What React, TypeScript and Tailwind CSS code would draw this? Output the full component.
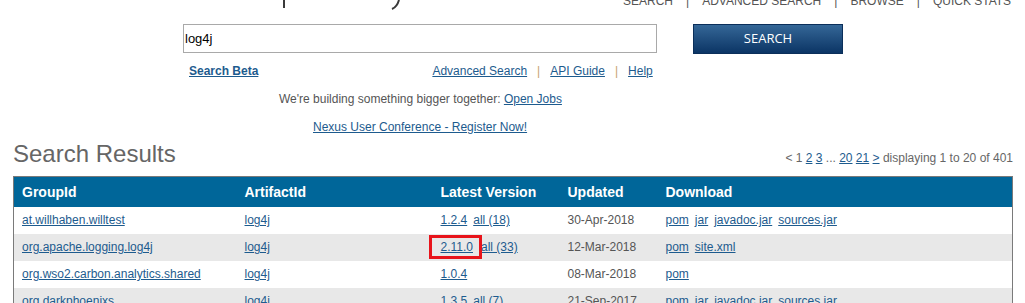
import React from 'react';

const rows = [
  { g: 'at.willhaben.willtest', a: 'log4j', v: '1.2.4', all: 'all (18)', d: '30-Apr-2018', dl: ['pom', 'jar', 'javadoc.jar', 'sources.jar'] },
  { g: 'org.apache.logging.log4j', a: 'log4j', v: '2.11.0', all: 'all (33)', d: '12-Mar-2018', dl: ['pom', 'site.xml'], mark: true },
  { g: 'org.wso2.carbon.analytics.shared', a: 'log4j', v: '1.0.4', all: '', d: '08-Mar-2018', dl: ['pom'] },
  { g: 'org.darkphoenixs', a: 'log4j', v: '1.3.5', all: 'all (7)', d: '21-Sep-2017', dl: ['pom', 'jar', 'javadoc.jar', 'sources.jar'] },
];

const link = 'text-[#1d5b8e] underline';

export default function App() {
  return (
    <div className="w-[1025px] h-[303px] overflow-hidden bg-white text-[12px] font-['Liberation_Sans',Arial,sans-serif]">
      {/* header strip, mostly scrolled off */}
      <div className="relative h-[20px]">
        <svg className="absolute left-0 top-0" width="420" height="12">
          <rect x="283" y="0" width="2" height="8" fill="#3a3a3a" />
          <path d="M399 0 Q397 7 392 9" stroke="#3a3a3a" strokeWidth="2" fill="none" />
        </svg>
        <div className="absolute left-[623px] top-[-8px] flex items-center whitespace-nowrap text-[12px] text-[#555]">
          <span>SEARCH</span>
          <span className="mx-[13px]">|</span>
          <span>ADVANCED SEARCH</span>
          <span className="mx-[13px]">|</span>
          <span>BROWSE</span>
          <span className="mx-[13px]">|</span>
          <span>QUICK STATS</span>
        </div>
      </div>

      <div className="flex items-start mt-[4px]">
        <div className="ml-[183px] w-[474px] h-[29px] border border-[#a9a9a9] flex items-center pl-[1px] text-[13px] text-black">
          log4j
        </div>
        <button className="ml-[36px] w-[150px] h-[30px] bg-gradient-to-b from-[#356797] to-[#0b3565] text-white text-[13px] font-['Open_Sans',sans-serif] border border-[#0b2f5a]">
          SEARCH
        </button>
      </div>

      <div className="flex items-center mt-[9px] h-[16px]">
        <span className={`${link} ml-[189px] font-bold`}>Search Beta</span>
        <div className="ml-[174px] flex items-center text-[#c8a272]">
          <span className={link}>Advanced Search</span>
          <span className="mx-[10px]">|</span>
          <span className={link}>API Guide</span>
          <span className="mx-[10px]">|</span>
          <span className={link}>Help</span>
        </div>
      </div>

      <div className="mt-[11px] h-[16px] text-[#555] pl-[279px]">
        We're building something bigger together: <span className={link}>Open Jobs</span>
      </div>

      <div className="mt-[12px] h-[16px] pl-[313px]">
        <span className={link}>Nexus User Conference - Register Now!</span>
      </div>

      <div className="flex items-end justify-between ml-[13px] w-[1000px] mt-[6px]">
        <div className="text-[24px] text-[#666] leading-[28px]">Search Results</div>
        <div className="text-[#666] mb-[1px]">
          &lt; 1 <span className={link}>2</span> <span className={link}>3</span> ... <span className={link}>20</span>{' '}
          <span className={link}>21</span> <span className={link}>&gt;</span> displaying 1 to 20 of 401
        </div>
      </div>

      <table className="ml-[13px] mt-[8px] w-[1000px] border-l border-t border-r border-[#7a7a7a] border-collapse">
        <thead>
          <tr className="bg-[#006699] text-white text-[14px] font-bold h-[30px] text-left">
            <th className="w-[223px] pl-[8px] pt-[1px]">GroupId</th>
            <th className="w-[196px] pl-[8px] pt-[1px]">ArtifactId</th>
            <th className="w-[127px] pl-[8px] pt-[1px]">Latest Version</th>
            <th className="w-[98px] pl-[8px] pt-[1px]">Updated</th>
            <th className="pl-[8px] pt-[1px]">Download</th>
          </tr>
        </thead>
        <tbody>
          {rows.map((r, i) => (
            <tr key={i} className={`h-[27px] ${i % 2 ? 'bg-[#e8e8e8]' : 'bg-white'}`}>
              <td className="pl-[8px]"><span className={link}>{r.g}</span></td>
              <td className="pl-[8px]"><span className={link}>{r.a}</span></td>
              <td className="pl-[8px]">
                {r.mark ? (
                  <span className="relative">
                    <span className={link}>{r.v}</span>
                    <span className="absolute left-[-12px] top-[-5px] w-[53px] h-[24px] border-[3px] border-[#e8141b]" />
                  </span>
                ) : (
                  <span className={link}>{r.v}</span>
                )}
                {r.all && <span className={`${link} ${r.mark ? 'ml-[8px]' : 'ml-[6px]'}`}>{r.all}</span>}
              </td>
              <td className="pl-[8px] text-[#555]">{r.d}</td>
              <td className="pl-[8px]">
                {r.dl.map((x, j) => (
                  <span key={j} className={`${link} ${j ? 'ml-[6px]' : ''}`}>{x}</span>
                ))}
              </td>
            </tr>
          ))}
        </tbody>
      </table>
    </div>
  );
}
